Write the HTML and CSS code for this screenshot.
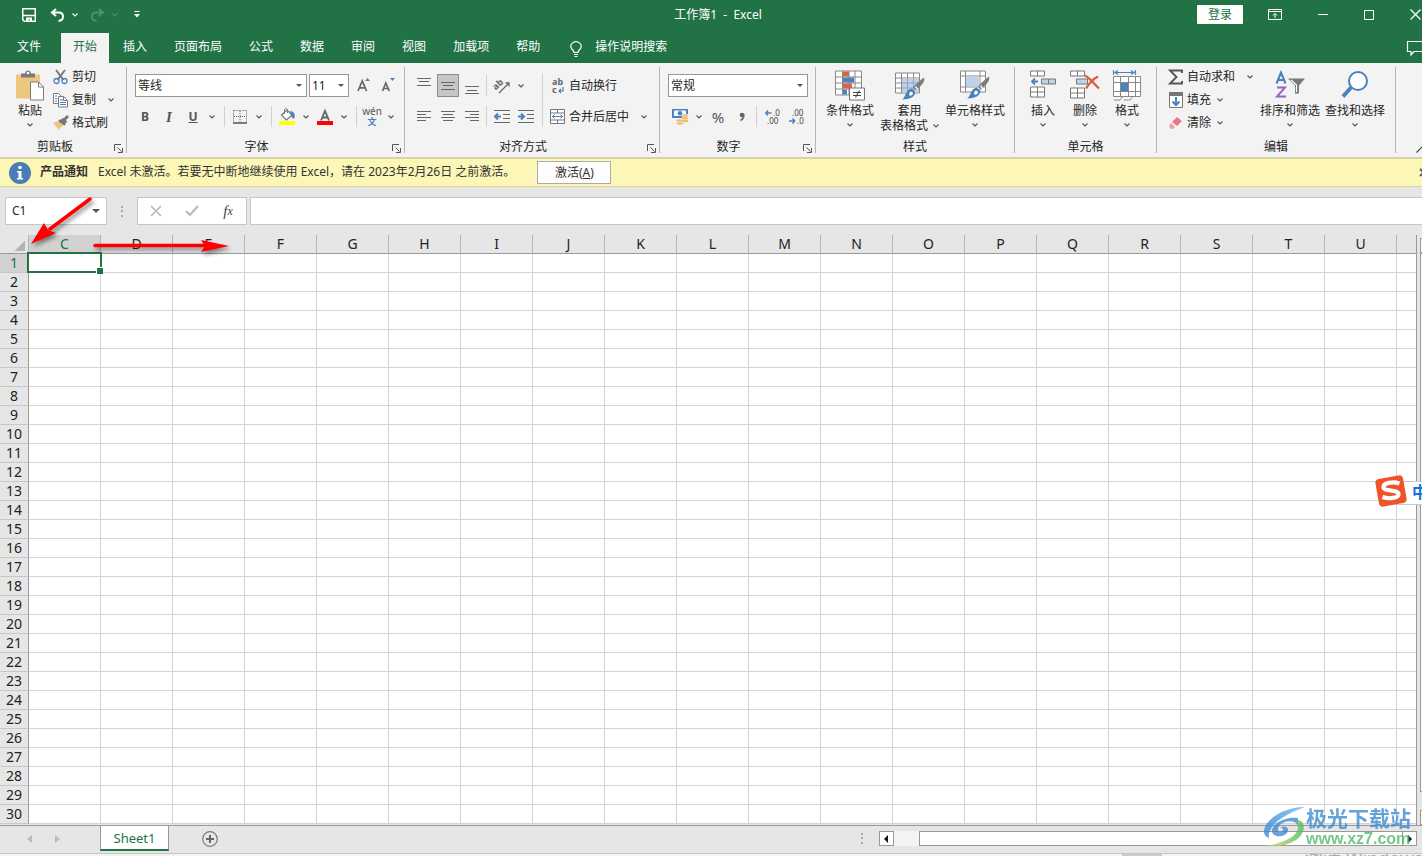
FILE: index.html
```html
<!DOCTYPE html>
<html lang="zh-CN">
<head>
<meta charset="utf-8">
<title>工作簿1 - Excel</title>
<link rel="stylesheet" href="styles.css">
</head>
<body>
<svg class="defs" aria-hidden="true">
  <symbol id="chev" viewBox="0 0 6 4"><path d="M.5.5 3 3 5.500.5" fill="none" stroke="currentColor" stroke-width="1.100"/></symbol>
  <symbol id="launch" viewBox="0 0 9 9"><path d="M.5 7V.5H7M3.500 3.500 7.500 7.500M8.500 4v4.500H4" fill="none" stroke="#555"/></symbol>
  <symbol id="brush" viewBox="0 0 24 24"><path d="M23 1c1 3-1 6-3 8l-5 5-3-3c3-4 7-7 11-10z" fill="#7d7d7d"/><path d="M14.500 10 16.500 13" stroke="#f3f3f3" stroke-width="1.500"/><path d="M11 12l3 3c1 5-5 8-13 8 4-2 3-10 10-11z" fill="#4a82bd"/><path d="M9 15.500c2-1 4 1 2 3s-4 0-2-3z" fill="#fff"/></symbol>
</svg>

<header class="top">
  <div class="titlebar">
    <div class="quick">
      <button class="tb" aria-label="保存"><svg width="14" height="14" viewBox="0 0 14 14"><path d="M.75.75h12.500v12.500h-11l-1.500-1.500z M1 7.500h12" fill="none" stroke="#fff" stroke-width="1.500"/><path d="M4 9.500h6V14H8v-2.500H6.500V14H4z" fill="#fff"/></svg></button>
      <button class="tb undo" aria-label="撤消"><svg width="15" height="14" viewBox="0 0 15 14"><path d="M6 1 2 4.500 6 8M2 4.500h6.500c6 0 6 8 0 8.500" fill="none" stroke="#fff" stroke-width="2"/></svg></button>
      <svg class="chev" width="6" height="4"><use href="#chev"/></svg>
      <button class="tb redo" aria-label="恢复"><svg width="15" height="14" viewBox="0 0 15 14"><path d="M9 1l4 3.500L9 8M13 4.500H6.500c-6 0-6 8 0 8.500" fill="none" stroke="#4f9069" stroke-width="2"/></svg></button>
      <svg class="chev dim" width="6" height="4"><use href="#chev"/></svg>
      <button class="tb more" aria-label="自定义快速访问工具栏"><svg width="6" height="7" viewBox="0 0 6 7"><path d="M.5.5h5" stroke="#fff" stroke-width="1"/><path d="M0 3h6L3 6.500z" fill="#fff"/></svg></button>
    </div>
    <div class="title">工作簿1&nbsp; -&nbsp; Excel</div>
    <div class="window">
      <button class="login">登录</button>
      <button class="tb" aria-label="功能区显示选项"><svg width="14" height="11" viewBox="0 0 14 11"><path d="M.5.5h13v10H.5zM.5 2.500h13M7 9V4.500M5 6.500l2-2 2 2" fill="none" stroke="#fff"/></svg></button>
      <button class="tb" aria-label="最小化"><svg width="10" height="11" viewBox="0 0 10 11"><path d="M0 5.500h10" stroke="#fff"/></svg></button>
      <button class="tb" aria-label="最大化"><svg width="10" height="10" viewBox="0 0 10 10"><path d="M.5.5h9v9h-9z" fill="none" stroke="#fff"/></svg></button>
      <button class="tb" aria-label="关闭"><svg width="11" height="11" viewBox="0 0 11 11"><path d="M.5.5l10 10M10.500.5l-10 10" fill="none" stroke="#fff" stroke-width="1.200"/></svg></button>
    </div>
  </div>
  <nav class="tabs">
    <button class="tab">文件</button><button class="tab on">开始</button><button class="tab">插入</button><button class="tab">页面布局</button><button class="tab">公式</button><button class="tab">数据</button><button class="tab">审阅</button><button class="tab">视图</button><button class="tab">加载项</button><button class="tab">帮助</button>
    <button class="tell"><svg width="12" height="16" viewBox="0 0 12 16"><path d="M4 11.500C4 9 .75 8.500.75 5.500a5.200 4.800 0 0 1 10.500 0C11.250 8.500 8 9 8 11.500zM4 13.500h4M4.500 15.500h3" fill="none" stroke="#fff" stroke-width="1.200"/></svg>操作说明搜索</button>
    <button class="tb comment" aria-label="批注"><svg width="18" height="15" viewBox="0 0 18 15"><path d="M.5.5h17v10H7l-3 3.500v-3.500H.5z" fill="none" stroke="#fff" stroke-width="1.200"/></svg></button>
  </nav>
</header>

<main>
<div class="ribbon">
  <section class="group clip">
    <div class="body">
      <button class="big"><svg width="28" height="30" viewBox="0 0 28 30"><path d="M0 4h24v24H0z" fill="#eec77e"/><path d="M5 7V3h4c0-4 6-4 6 0h4v4z" fill="#7a7a7a"/><circle cx="12" cy="2.500" r="1.300" fill="#fff"/><path d="M14.500 11.500h8l5 5v13h-13z" fill="#fff" stroke="#7a7a7a"/><path d="M22.500 11.500v5h5" fill="none" stroke="#7a7a7a"/></svg><span>粘贴</span><svg class="chev" width="6" height="4"><use href="#chev"/></svg></button>
      <div class="stack">
        <button class="small"><svg width="16" height="16" viewBox="0 0 16 16"><path d="M3 1l7.500 10M12 1 4.500 11" stroke="#777" stroke-width="2"/><circle cx="3.500" cy="12" r="2.500" fill="none" stroke="#4a82bd" stroke-width="1.300"/><circle cx="11.500" cy="12" r="2.500" fill="none" stroke="#4a82bd" stroke-width="1.300"/></svg>剪切</button>
        <button class="small"><svg width="16" height="16" viewBox="0 0 16 16"><path d="M5 11.500H.5v-10h5l3 3M5.500 4.500h5l4 4v6.500h-9z" fill="#fff" stroke="#7a7a7a"/><path d="M2 4h2M2 6.500h2M2 9h2M7 8h3M7 10.500h6M7 12.500h6" stroke="#4a82bd"/><path d="M10.500 4.500v4h4" fill="none" stroke="#7a7a7a"/></svg>复制<svg class="chev far" width="6" height="4"><use href="#chev"/></svg></button>
        <button class="small"><svg width="16" height="16" viewBox="0 0 16 16"><path d="M0 8l5-2 5 4-4 5z" fill="#eec77e"/><path d="M6 5l6 5M7 6.500l3-2.500 3 2.500-2 3z" stroke="#777" stroke-width="1.800" fill="#777"/><path d="M11 5l4-4" stroke="#777" stroke-width="3"/></svg>格式刷</button>
      </div>
    </div>
    <footer>剪贴板<svg width="9" height="9"><use href="#launch"/></svg></footer>
  </section>

  <section class="group font">
    <div class="body col">
      <div class="row">
        <span class="drop face"><select aria-label="字体"><option>等线</option></select></span>
        <span class="drop size"><select aria-label="字号"><option>11</option></select></span>
        <button class="ib" aria-label="增大字号"><svg width="14" height="16" viewBox="0 0 14 16"><path d="M1 13 5.300 3l4.200 10M2.500 9.800h5.600" fill="none" stroke="#666" stroke-width="1.700"/><path d="M8 3h5l-2.500-3z" fill="#4a82bd"/></svg></button>
        <button class="ib" aria-label="减小字号"><svg width="14" height="16" viewBox="0 0 14 16"><path d="M1.500 13 4.800 5l3.400 8M2.500 10.500h4.600" fill="none" stroke="#666" stroke-width="1.700"/><path d="M9 0h5l-2.500 3z" fill="#4a82bd"/></svg></button>
      </div>
      <div class="row tight">
        <button class="ib b">B</button><button class="ib i">I</button><button class="ib u">U</button><svg class="chev" width="6" height="4"><use href="#chev"/></svg><i class="sep"></i>
        <button class="ib" aria-label="边框"><svg width="14" height="14" viewBox="0 0 14 14"><path d="M.5.5h13v12M.5.5v12M7 1v12M1 6.500h12" fill="none" stroke="#666" stroke-dasharray="1 1"/><path d="M0 13h14" stroke="#555" stroke-width="1.500"/></svg></button><svg class="chev" width="6" height="4"><use href="#chev"/></svg><i class="sep"></i>
        <button class="ib" aria-label="填充颜色"><svg width="17" height="18" viewBox="0 0 17 18"><path d="M2.500 7 8 2l5 5-5.500 5z" fill="#fff" stroke="#777" stroke-width="1.200"/><path d="M5.500 6V2c0-2 3-2 3 0V5" fill="none" stroke="#777"/><path d="M11 3c4 0 6 4 4 8l-2.500-2z" fill="#4a82bd"/><path d="M0 13h16v4H0z" fill="#ff0"/></svg></button><svg class="chev" width="6" height="4"><use href="#chev"/></svg>
        <button class="ib" aria-label="字体颜色"><svg width="16" height="18" viewBox="0 0 16 18"><path d="M4 12.500 8 3l4 9.500M5.500 9.500h5" fill="none" stroke="#666" stroke-width="1.900"/><path d="M0 13h16v4H0z" fill="red"/></svg></button><svg class="chev" width="6" height="4"><use href="#chev"/></svg><i class="sep"></i>
        <button class="ib wen"><span>wén</span><b>文</b></button><svg class="chev" width="6" height="4"><use href="#chev"/></svg>
      </div>
    </div>
    <footer>字体<svg width="9" height="9"><use href="#launch"/></svg></footer>
  </section>

  <section class="group align">
    <div class="body">
      <div class="col">
        <div class="row tight">
          <button class="ib" aria-label="顶端对齐"><svg width="14" height="20" viewBox="0 0 14 20"><path d="M0 2.500h14M2 5.500h10M0 9.500h14" stroke="#666"/></svg></button>
          <button class="ib on" aria-label="垂直居中"><svg width="14" height="20" viewBox="0 0 14 20"><path d="M0 6.500h14M2 9.500h10M0 13.500h14" stroke="#666"/></svg></button>
          <button class="ib" aria-label="底端对齐"><svg width="14" height="20" viewBox="0 0 14 20"><path d="M0 10.500h14M2 14.500h10M0 17.500h14" stroke="#666"/></svg></button><i class="sep"></i>
          <button class="ib" aria-label="方向"><svg width="17" height="16" viewBox="0 0 17 16"><text x="0" y="10" class="ab" transform="rotate(-42 4 9)">ab</text><path d="M5 15 15 5M11.500 5H15v3.500" fill="none" stroke="#666" stroke-width="1.300"/></svg></button><svg class="chev" width="6" height="4"><use href="#chev"/></svg>
        </div>
        <div class="row tight">
          <button class="ib" aria-label="左对齐"><svg width="14" height="14" viewBox="0 0 14 14"><path d="M0 1.500h14M0 4.500h9M0 7.500h14M0 10.500h9" stroke="#666"/></svg></button>
          <button class="ib" aria-label="居中"><svg width="14" height="14" viewBox="0 0 14 14"><path d="M0 1.500h14M2 4.500h10M0 7.500h14M2 10.500h10" stroke="#666"/></svg></button>
          <button class="ib" aria-label="右对齐"><svg width="14" height="14" viewBox="0 0 14 14"><path d="M0 1.500h14M5 4.500h9M0 7.500h14M5 10.500h9" stroke="#666"/></svg></button><i class="sep"></i>
          <button class="ib" aria-label="减少缩进量"><svg width="16" height="14" viewBox="0 0 16 14"><path d="M0 .5h16M9 4.500h7M9 8.500h7M0 12.500h16" stroke="#666"/><path d="M7 6.500H1M4 3.500l-3 3 3 3" fill="none" stroke="#4a82bd" stroke-width="2"/></svg></button>
          <button class="ib" aria-label="增加缩进量"><svg width="16" height="14" viewBox="0 0 16 14"><path d="M0 .5h16M9 4.500h7M9 8.500h7M0 12.500h16" stroke="#666"/><path d="M0 6.500h6M3 3.500l3 3-3 3" fill="none" stroke="#4a82bd" stroke-width="2"/></svg></button>
        </div>
      </div>
      <i class="sep tall"></i>
      <div class="col">
        <div class="row"><button class="small"><svg width="16" height="16" viewBox="0 0 16 16"><text x="2" y="7" class="ab">ab</text><text x="2" y="15" class="ab">c</text><path d="M13 9v4H9M11 11l-2 2 2 2" fill="none" stroke="#4a82bd" stroke-width="1.200"/></svg>自动换行</button></div>
        <div class="row"><button class="small"><svg width="16" height="15" viewBox="0 0 16 15"><path d="M.5.5h14v14H.5zM.5 4h14M.5 11h14M7.500.5V4M7.500 11v3.500" fill="#fff" stroke="#777"/><path d="M2.500 7.500h10M4.500 5.500l-2 2 2 2M10.500 5.500l2 2-2 2" fill="none" stroke="#4a82bd"/></svg>合并后居中<svg class="chev far" width="6" height="4"><use href="#chev"/></svg></button></div>
      </div>
    </div>
    <footer>对齐方式<svg width="9" height="9"><use href="#launch"/></svg></footer>
  </section>

  <section class="group number">
    <div class="body col">
      <div class="row"><span class="drop fmt"><select aria-label="数字格式"><option>常规</option></select></span></div>
      <div class="row tight">
        <button class="ib" aria-label="会计数字格式"><svg width="17" height="17" viewBox="0 0 17 17"><path d="M0 1h16v9H0z" fill="#4a82bd"/><path d="M2 2.500h12v5.500H2z" fill="#fff"/><circle cx="8" cy="5.300" r="2.300" fill="#4a82bd"/><path d="M10 6h6v9h-6zM4 11h6v5H4z" fill="#f3f3f3"/><g fill="#eebd72"><ellipse cx="13" cy="7.500" rx="3.300" ry="1.200"/><ellipse cx="13" cy="10.300" rx="3.300" ry="1.200"/><ellipse cx="13" cy="13" rx="3.300" ry="1.200"/><ellipse cx="7.500" cy="12.500" rx="3.300" ry="1.200"/><ellipse cx="8" cy="15.500" rx="3.300" ry="1.200"/></g></svg></button><svg class="chev" width="6" height="4"><use href="#chev"/></svg>
        <button class="ib pct">%</button>
        <button class="ib" aria-label="千位分隔样式"><svg width="6" height="10" viewBox="0 0 6 10"><circle cx="3" cy="3" r="2.300" fill="#666"/><path d="M4.500 2c1 3-.5 5-3 6.500" fill="none" stroke="#666" stroke-width="1.600"/></svg></button><i class="sep"></i>
        <button class="ib" aria-label="增加小数位数"><svg width="15" height="15" viewBox="0 0 15 15"><text x="8" y="7" class="dec">.0</text><text x="2" y="15" class="dec">.00</text><path d="M6.500 4H1M3 1.500.8 4 3 6.500" fill="none" stroke="#4a82bd" stroke-width="1.500"/></svg></button>
        <button class="ib" aria-label="减少小数位数"><svg width="15" height="15" viewBox="0 0 15 15"><text x="3" y="7" class="dec">.00</text><text x="8" y="15" class="dec">.0</text><path d="M0 12h5.500M3.500 9.500 5.700 12l-2.200 2.500" fill="none" stroke="#4a82bd" stroke-width="1.500"/></svg></button>
      </div>
    </div>
    <footer>数字<svg width="9" height="9"><use href="#launch"/></svg></footer>
  </section>

  <section class="group styles">
    <div class="body">
      <button class="big"><svg width="30" height="30" viewBox="0 0 30 30"><path d="M.5.5h26v24H.5zM.5 6.500h26M.5 12.500h26M.5 18.500h26M7.500.5v24M14 .5v24M20 .5v24" fill="#fff" stroke="#888"/><path d="M8 1h6v5H8zM8 13h9v5H8z" fill="#dd6343"/><path d="M8 7h11v5H8zM8 19h4v5H8z" fill="#4a82bd"/><path d="M14.500 17.500h15v12h-15z" fill="#fff" stroke="#777"/><path d="M18 22h8M18 25h8M24.500 20l-4 7" stroke="#444" stroke-width="1.100"/></svg><span>条件格式</span><svg class="chev" width="6" height="4"><use href="#chev"/></svg></button>
      <button class="big"><svg width="30" height="30" viewBox="0 0 30 30"><path d="M.5 2.500h24v20H.5zM.5 7.500h24M.5 12.500h24M.5 17.500h24M6.500 2.500v20M12.500 2.500v20M18.500 2.500v20" fill="#fff" stroke="#888"/><path d="M7 8h17v14H7z" fill="#bfd2e8"/><path d="M7 12.500h17M7 17.500h17M12.500 8v14M18.500 8v14" stroke="#8fa5bd"/><use href="#brush" x="6" y="6" width="24" height="24"/></svg><span>套用</span><span>表格格式<svg class="chev side" width="6" height="4"><use href="#chev"/></svg></span></button>
      <button class="big"><svg width="30" height="30" viewBox="0 0 30 30"><path d="M.5.5h25v21H.5zM.5 5.500h25M.5 16.500h25M5.500.5v21M20 .5v21" fill="#fff" stroke="#888"/><path d="M6 6h14v10H6z" fill="#bfd2e8"/><use href="#brush" x="6" y="5" width="24" height="24"/></svg><span>单元格样式</span><svg class="chev" width="6" height="4"><use href="#chev"/></svg></button>
    </div>
    <footer>样式</footer>
  </section>

  <section class="group cells">
    <div class="body">
      <button class="big"><svg width="28" height="30" viewBox="0 0 28 30"><path d="M1.500.5h14v5h-14zM8.500.5v5M1.500 16.500h14v10h-14zM1.500 21.500h14M8.500 16.500v10" fill="#fff" stroke="#777"/><path d="M12.500 8.500h14v5h-14zM19.500 8.500v5" fill="#bfd2e8" stroke="#777"/><path d="M9 11H3M6 8l-3 3 3 3" fill="none" stroke="#4a82bd" stroke-width="1.800"/></svg><span>插入</span><svg class="chev" width="6" height="4"><use href="#chev"/></svg></button>
      <button class="big"><svg width="30" height="30" viewBox="0 0 30 30"><path d="M.5.5h14v5H.5zM7.500.5v5M.5 17.500h14v10H.5zM.5 22.500h14M7.500 17.500v10" fill="#fff" stroke="#777"/><path d="M6.500 8.500h11v5h-11z" fill="#bfd2e8" stroke="#777"/><path d="M15 5c5 3 9 8 14 13M28 6c-6 3-9 7-12 12" fill="none" stroke="#dd5b3d" stroke-width="2.200"/></svg><span>删除</span><svg class="chev" width="6" height="4"><use href="#chev"/></svg></button>
      <button class="big"><svg width="28" height="31" viewBox="0 0 28 31"><path d="M.5 0v5M22.500 0v5M2 2.500h19M5 .5l-3 2 3 2M18 .5l3 2-3 2" fill="none" stroke="#4a82bd" stroke-width="1.200"/><path d="M.5 6.500h27v20H.5zM.5 12.500h27M.5 21.500h27M7.500 6.500v20M15.500 6.500v20M22.500 6.500v20M1 30h6l3-4M11 30h6l3-4" fill="#fff" stroke="#888"/><path d="M8 13h7v8H8z" fill="#4a82bd"/></svg><span>格式</span><svg class="chev" width="6" height="4"><use href="#chev"/></svg></button>
    </div>
    <footer>单元格</footer>
  </section>

  <section class="group edit">
    <div class="body">
      <div class="stack">
        <button class="small"><svg width="16" height="16" viewBox="0 0 16 16"><path d="M14 4V1.500H2L8.500 8 2 14.500h12V12" fill="none" stroke="#555" stroke-width="1.900"/></svg>自动求和<svg class="chev far" width="6" height="4"><use href="#chev"/></svg></button>
        <button class="small"><svg width="16" height="16" viewBox="0 0 16 16"><path d="M1.500.5h13v15h-13z" fill="#fff" stroke="#777"/><path d="M1 0h14v4H1z" fill="#777"/><path d="M8 5v8M4.500 9.500 8 13l3.500-3.500" fill="none" stroke="#4a82bd" stroke-width="2"/></svg>填充<svg class="chev near" width="6" height="4"><use href="#chev"/></svg></button>
        <button class="small"><svg width="16" height="16" viewBox="0 0 16 16"><path d="M9 2l5 4-5 5-5-4z" fill="#e8788a"/><path d="M3 8l4 4-2 2H3l-2-3z" fill="#eda0ac"/></svg>清除<svg class="chev near" width="6" height="4"><use href="#chev"/></svg></button>
      </div>
      <button class="big sort"><svg width="30" height="30" viewBox="0 0 30 30"><path d="M1.500 13 6 2l4.500 11M3 9.500h6" fill="none" stroke="#4a82bd" stroke-width="2"/><path d="M2 17h8L2 26h9" fill="none" stroke="#9a62b8" stroke-width="1.900"/><path d="M13 8h17l-6 7v8h-4v-8z" fill="#777"/><path d="M16 9.500l5.500 5v7" fill="none" stroke="#fff" stroke-width="1.300"/></svg><span>排序和筛选</span><svg class="chev" width="6" height="4"><use href="#chev"/></svg></button>
      <button class="big"><svg width="28" height="30" viewBox="0 0 28 30"><path d="M10 17 2 26" stroke="#4a82bd" stroke-width="4"/><circle cx="17" cy="10.500" r="9" fill="#fff" stroke="#4a82bd" stroke-width="2"/></svg><span>查找和选择</span><svg class="chev" width="6" height="4"><use href="#chev"/></svg></button>
    </div>
    <footer>编辑</footer>
  </section>
  <button class="collapse" aria-label="折叠功能区"><svg width="12" height="7" viewBox="0 0 12 7"><path d="M.5 6.500 6 1l5.500 5.500" fill="none" stroke="#444" stroke-width="1.200"/></svg></button>
</div>

<div class="notice">
  <svg width="22" height="22" viewBox="0 0 22 22"><circle cx="11" cy="11" r="11" fill="#4a7db5"/><path d="M9 9h3.500v7H14v1.500H8V16h1.500v-5.500H8V9z" fill="#fff"/><circle cx="11" cy="5.500" r="1.800" fill="#fff"/></svg>
  <strong>产品通知</strong>
  <span class="msg">Excel 未激活。若要无中断地继续使用 Excel，请在 2023年2月26日 之前激活。</span>
  <button class="act">激活(<u>A</u>)</button>
  <button class="tb nclose" aria-label="关闭通知"><svg width="9" height="9" viewBox="0 0 9 9"><path d="M1 1l7 7M8 1 1 8" stroke="#555" stroke-width="1.800"/></svg></button>
</div>

<div class="formula">
  <span class="drop name"><input aria-label="名称框" value="C1"></span>
  <svg class="dots" width="3" height="11" viewBox="0 0 3 11"><path d="M0 0h2v2H0zM0 4h2v2H0zM0 9h2v2H0z" fill="#aaa"/></svg>
  <div class="fx">
    <button class="ib" aria-label="取消"><svg width="12" height="12" viewBox="0 0 12 12"><path d="M1 1l10 10M11 1 1 11" stroke="#bbb" stroke-width="1.700"/></svg></button>
    <button class="ib" aria-label="输入"><svg width="14" height="12" viewBox="0 0 14 12"><path d="M1 6l4 4 8-9" fill="none" stroke="#bbb" stroke-width="2.200"/></svg></button>
    <button class="ib fn" aria-label="插入函数">f<sub>x</sub></button>
  </div>
  <input class="entry" aria-label="编辑栏">
</div>

<div class="work">
  <div class="sheet">
    <table id="grid"></table>
    <div class="cursor"></div>
  </div>
  <div class="vbar"><i class="up"></i><i class="thumb"></i><i class="down"></i></div>
</div>

<div class="sheetbar">
  <button class="tb arrow" aria-label="上一个"><svg width="5" height="8" viewBox="0 0 5 8"><path d="M5 0v8L0 4z" fill="#bbb"/></svg></button>
  <button class="tb arrow" aria-label="下一个"><svg width="5" height="8" viewBox="0 0 5 8"><path d="M0 0v8l5-4z" fill="#bbb"/></svg></button>
  <button class="stab">Sheet1</button>
  <button class="tb add" aria-label="新工作表"><svg width="16" height="16" viewBox="0 0 16 16"><circle cx="8" cy="8" r="7.300" fill="none" stroke="#777" stroke-width="1.200"/><path d="M8 4v8M4 8h8" stroke="#666" stroke-width="2"/></svg></button>
  <svg class="dots" width="3" height="11" viewBox="0 0 3 11"><path d="M0 0h2v2H0zM0 4h2v2H0zM0 9h2v2H0z" fill="#aaa"/></svg>
  <div class="hbar">
    <button class="tb" aria-label="向左滚动"><svg width="5" height="8" viewBox="0 0 5 8"><path d="M4 0v8L0 4z" fill="#111"/></svg></button>
    <i class="hthumb"></i>
    <button class="tb" aria-label="向右滚动"><svg width="5" height="8" viewBox="0 0 5 8"><path d="M1 0v8l4-4z" fill="#111"/></svg></button>
  </div>
</div>
<div class="status"><i></i><span>激活 Windows</span></div>
</main>

<svg class="marks" width="240" height="70" viewBox="0 0 240 70" aria-hidden="true">
  <g class="arrows"><path d="M90 5 50 35" stroke="red" stroke-width="3.500" stroke-linecap="round"/><path d="M31 50 44 29 48 36 56 39z" fill="red"/>
  <path d="M95 51.500h112" stroke="red" stroke-width="3.500" stroke-linecap="round"/><path d="M229 52l-28 6 4-6-4-6z" fill="red"/></g>
</svg>

<div class="ime"><span>中</span><svg width="32" height="32" viewBox="0 0 32 32"><rect x="2" y="2" width="28" height="28" rx="4" fill="#ee5428" transform="rotate(-10 16 16)"/><path d="M24.500 8.500C18 6 8 8 8.500 12.500c.5 4 14.500 2 15 6.500.4 4-9 5.500-16 3" fill="none" stroke="#fff" stroke-width="4.200"/></svg></div>

<div class="brand">
  <svg width="44" height="42" viewBox="0 0 44 42"><defs><linearGradient id="bl" x1="0" x2="1"><stop offset="0" stop-color="#3d8ad8"/><stop offset="1" stop-color="#79bdf0"/></linearGradient><linearGradient id="gr" x1="0" x2="1"><stop offset="0" stop-color="#c9dc6b"/><stop offset="1" stop-color="#55bb63"/></linearGradient></defs><path d="M42 1C25 0 2 12 1 25c0 4 2 6 5 7-2-12 14-23 36-31z" fill="url(#bl)"/><path d="M30 13c15 0 13 14 3 21-9 6-21 7-29 6 9-2 30-7 31-18 0-3-2-5-5-9z" fill="url(#gr)"/><path d="M35 12C22 10 9 18 9 25c0 7 14 7 16 0 1-4-4-6-8-3 4-1 4 4 0 4-4-1-2-8 5-10 6-2 11 0 13 3z" fill="#428bd5"/></svg>
  <div><b>极光下载站</b><em>www.xz7.com</em></div>
</div>
<script src="grid.js"></script>
</body>
</html>
```
FILE: grid.js
```js
const columns = "CDEFGHIJKLMNOPQRSTU".split("");
const rowCount = 30;
const table = document.getElementById("grid");

const head = table.createTHead().insertRow();
["", ...columns, ""].forEach((name) => {
  const th = document.createElement("th");
  th.textContent = name;
  if (name === "C") th.className = "sel";
  head.append(th);
});
head.firstElementChild.className = "corner";
head.lastElementChild.className = "rest";

const body = table.createTBody();
for (let n = 1; n <= rowCount; n++) {
  const row = body.insertRow();
  const th = document.createElement("th");
  th.textContent = n;
  if (n === 1) th.className = "sel";
  row.append(th);
  for (let c = 0; c <= columns.length; c++) row.insertCell();
}
```
FILE: styles.css
```css
* { box-sizing: border-box; }
html, body { margin: 0; overflow: hidden; }
body {
  position: relative;
  min-height: 100vh;
  display: flex;
  flex-direction: column;
  font: 12px/16px "Noto Sans", "Noto Sans CJK SC", sans-serif;
  color: #262626;
  background: #e6e6e6;
}
button, input, select { font: inherit; color: inherit; border: 0; padding: 0; margin: 0; background: none; border-radius: 0; white-space: nowrap; }
svg { display: block; flex: none; overflow: visible; }
.defs { position: absolute; width: 0; height: 0; }
.chev { color: #555; }
main { flex: 1; display: flex; flex-direction: column; }

/* title bar and tabs */
.top { background: #217346; color: #fff; }
.titlebar { height: 33px; display: grid; grid-template-columns: 1fr auto 1fr; align-items: center; padding-bottom: 4px; }
.tb { display: flex; align-items: center; justify-content: center; }
.quick { display: flex; align-items: center; padding-left: 22px; }
.quick .chev { color: #fff; margin-left: 7px; }
.quick .dim { color: #4f9069; }
.undo { margin-left: 14px; }
.redo { margin-left: 12px; }
.more { margin-left: 16px; }
.title { padding-left: 14px; }
.window { display: flex; align-items: center; justify-content: flex-end; gap: 36px; margin-right: 1px; }
.login { width: 46px; height: 19px; line-height: 18px; background: #fff; color: #217346; border-radius: 1px; margin-right: -11px; }
.tabs { display: flex; height: 30px; padding-left: 4px; gap: 1px; }
.tab { padding: 0 13px 2px; }
.tab.on { background: #f3f3f3; color: #217346; margin: 0 0 0 6px; padding: 0 12px 2px; }
.tell { display: flex; align-items: center; gap: 13px; margin-left: 16px; padding-bottom: 2px; }
.tell svg { margin-top: 3px; }
.comment { margin: 0 -3px 0 auto; }

/* ribbon */
.ribbon { display: flex; height: 95px; background: #f3f3f3; border-bottom: 1px solid #d0d0d0; padding-top: 4px; }
.group { display: flex; flex-direction: column; height: 86px; border-right: 1px solid #b5b5b5; flex: none; }
.body { display: flex; height: 72px; }
.col { display: flex; flex-direction: column; padding-top: 3px; }
.row { display: flex; align-items: center; height: 31px; }
.group footer { position: relative; text-align: center; height: 14px; line-height: 16px; }
.group footer svg { position: absolute; right: 3px; bottom: 0; }
.clip { width: 127px; }
.clip footer { padding-right: 16px; }
.font { width: 278px; }
.font footer { padding-right: 18px; }
.align { width: 255px; }
.align footer { padding-right: 18px; }
.number { width: 156px; }
.number footer { padding-right: 18px; }
.styles { width: 199px; }
.cells { width: 142px; }
.edit { width: 239px; }
.big { display: flex; flex-direction: column; align-items: center; padding-top: 3px; line-height: 15px; }
.big > svg:first-child { height: 31px; margin-bottom: 2px; }
.big > .chev { margin-top: 5px; }
.big > span { display: flex; align-items: center; }
.side { margin-left: 5px; }
.clip .big { margin: 0 9px 0 16px; }
.stack { display: flex; flex-direction: column; margin-top: -2px; }
.small { display: flex; align-items: center; height: 23px; gap: 3px; }
.far { margin-left: 9px; }
.near { margin-left: 3px; }
.styles .body { padding-left: 10px; gap: 6px; }
.cells .body { padding-left: 14px; gap: 13px; }
.edit .body { padding-left: 11px; }
.edit .sort { margin: 0 5px 0 7px; }
.ib { display: flex; align-items: center; justify-content: center; width: 24px; height: 24px; flex: none; }
.ib.on { width: 22px; height: 23px; margin: 0 1px; background: #c6c6c6; border: 1px solid #8c8c8c; }
.b, .i, .u { font-weight: bold; color: #555; font-size: 12px; }
.i { font-style: italic; font-family: "Liberation Serif", serif; font-size: 15px; }
.u { text-decoration: underline; }
.tight .chev { margin: 0 4px; }
.sep { width: 1px; height: 21px; background: #d0d0d0; flex: none; }
.tight .sep { margin: 0 3px 0 2px; }
.font .body { padding-left: 6px; }
.font .row:first-child { padding-left: 2px; }
.font .tight .sep { margin: 0 3px 0 5px; }
.wen { flex-direction: column; font-size: 10px; color: #555; }
.wen span { line-height: 10px; }
.wen b { color: #4a82bd; font-size: 9px; line-height: 12px; }
.drop { position: relative; display: flex; height: 23px; border: 1px solid #979797; background: #fff; }
.drop::after { content: ""; position: absolute; right: 4px; top: 9px; border: 3px solid transparent; border-top-color: #555; border-bottom: 0; }
.drop select, .drop input { appearance: none; width: 100%; padding-left: 2px; outline: 0; }
.face { width: 172px; margin-right: 2px; }
.size { width: 40px; margin-right: 3px; }
.fmt { width: 140px; }
.ab { font: bold 9px "Noto Sans", sans-serif; fill: #666; }
.dec { font: 8px "Noto Sans", sans-serif; fill: #444; }
.align .body { padding-left: 7px; }
.tall { height: 54px; margin: 6px 7px 0 0; }
.align .body > .col:first-child { width: 130px; }
.number .body { padding-left: 8px; }
.pct { font-size: 15px; color: #555; }
.collapse { display: flex; align-items: flex-end; margin: 0 -6px 4px auto; }

/* activation notice */
.notice { display: flex; align-items: center; height: 29px; padding-left: 9px; background: #fcf7b6; border: 1px solid #dcd68a; border-width: 1px 0; color: #333; }
.notice strong { margin: 0 10px 2px 9px; }
.msg { margin-bottom: 2px; }
.act { width: 74px; height: 23px; line-height: 20px; margin-left: 22px; background: #fdfdfd; border: 1px solid #ababab; }
.nclose { margin: 0 -6px 0 auto; }

/* formula bar */
.formula { display: flex; align-items: center; height: 48px; padding: 0 0 0 5px; }
.name { width: 102px; height: 28px; border-color: #c6c6c6; }
.name::after { top: 11px; right: 6px; border-width: 4px 4px 0; }
.drop.name input { padding-left: 6px; }
.formula .dots { margin: 0 13px 0 14px; }
.fx { display: flex; align-items: center; justify-content: space-around; width: 110px; height: 28px; background: #fff; border: 1px solid #c6c6c6; margin-right: 3px; }
.fn { font: italic 15px "Liberation Serif", serif; color: #444; }
.fn sub { font-size: 12px; }
.entry { flex: 1; min-width: 0; height: 28px; background: #fff; border: 1px solid #c6c6c6; border-right: 0; }

/* grid */
.work { display: flex; margin-right: -15px; border-bottom: 1px solid #999; }
.sheet { position: relative; flex: 1; min-width: 0; overflow: hidden; border-right: 1px solid #999; }
table { width: 100%; table-layout: fixed; border-spacing: 0; font-size: 14px; line-height: 18px; background: #fff; margin-bottom: 1px; }
th { font-weight: normal; padding: 0; color: #222; background: #e6e6e6; height: 19px; }
thead th { width: 72px; height: 19px; border-bottom: 1px solid #999; border-right: 1px solid #b5b5b5; }
thead th.corner { width: 29px; background: linear-gradient(135deg, #e6e6e6 50%, #b4b4b4 50%) 14px 5px / 11px 11px no-repeat #e6e6e6; }
thead th.rest { width: auto; border-right: 0; }
tbody th { border-right: 1px solid #999; border-bottom: 1px solid #c8c8c8; }
th.sel { background: #d2d2d2; color: #217346; }
td { padding: 0; border: 1px solid #d4d4d4; border-width: 0 1px 1px 0; }
td:last-child { border-right: 0; }
.cursor { position: absolute; left: 27px; top: 17px; width: 75px; height: 21px; border: 2px solid #217346; }
.cursor::after { content: ""; position: absolute; right: -3px; bottom: -3px; width: 6px; height: 6px; background: #217346; border: 1px solid #fff; border-width: 1px 0 0 1px; }
.vbar { display: flex; flex-direction: column; width: 20px; padding: 3px 0 0 3px; }
.vbar i { border: 1px solid #999; background: #fff; }
.up, .down { height: 15px; flex: none; }
.thumb { flex: 1; margin-bottom: 18px; }

/* sheet tabs and status */
.sheetbar { display: flex; align-items: center; height: 27px; padding: 0 5px 2px 0; }
.arrow { width: 5px; margin-left: 27px; margin-right: -4px; }
.stab { align-self: flex-start; width: 69px; height: 25px; margin-left: 44px; background: #fff; color: #217346; font-size: 13px; line-height: 22px; border: 1px solid #999; border-width: 0 1px 2px; border-bottom-color: #217346; }
.add { margin-left: 33px; }
.sheetbar .dots { margin-left: auto; margin-right: 15px; }
.hbar { display: flex; width: 38%; height: 15px; background: #f3f3f3; }
.hbar button { width: 15px; border: 1px solid #999; background: #fff; }
.hthumb { flex: 1; margin-left: 25px; background: #fff; border: 1px solid #999; border-right: 0; }
.status { flex: 1 0 0; height: 0; display: flex; justify-content: flex-end; overflow: hidden; background: #f3f3f3; border-top: 1px solid #c6c6c6; color: #aaa; font-size: 18px; }
.status i { width: 40px; background: #ccc; margin-right: 143px; }
.status span { width: 117px; height: 16px; white-space: nowrap; line-height: 8px; }

/* overlays */
.marks { position: absolute; left: 0; top: 194px; }
.arrows { filter: drop-shadow(2px 3px 2px rgba(0, 0, 0, .45)); }
.ime { position: absolute; right: 0; top: 475px; width: 47px; height: 32px; overflow: hidden; }
.ime span { position: absolute; left: 20px; top: 6px; width: 40px; height: 24px; padding-left: 16px; background: #fff; border: 1px solid #b9cde4; font-size: 16px; line-height: 21px; font-weight: bold; color: #1670d8; }
.ime svg { position: absolute; left: 0; top: 0; }
.brand { position: absolute; right: 11px; top: 806px; display: flex; align-items: center; opacity: .8; }
.brand div { display: flex; flex-direction: column; margin-left: -1px; }
.brand b { font-size: 21px; line-height: 24px; color: #3f8cd2; }
.brand em { font: bold 16px/18px "Liberation Sans", sans-serif; color: #4fbb68; }
```
